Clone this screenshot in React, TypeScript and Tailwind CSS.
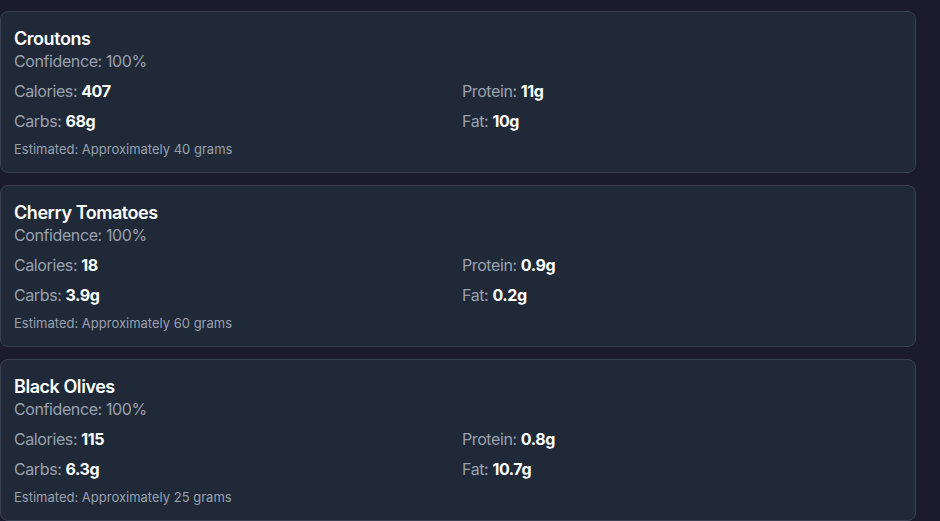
const foods = [
  {
    name: "Croutons",
    confidence: "100%",
    calories: "407",
    protein: "11g",
    carbs: "68g",
    fat: "10g",
    estimate: "Approximately 40 grams",
  },
  {
    name: "Cherry Tomatoes",
    confidence: "100%",
    calories: "18",
    protein: "0.9g",
    carbs: "3.9g",
    fat: "0.2g",
    estimate: "Approximately 60 grams",
  },
  {
    name: "Black Olives",
    confidence: "100%",
    calories: "115",
    protein: "0.8g",
    carbs: "6.3g",
    fat: "10.7g",
    estimate: "Approximately 25 grams",
  },
];

function Stat({ label, value }: { label: string; value: string }) {
  return (
    <p className="text-base leading-6 tracking-tight text-gray-400">
      {label}: <span className="font-bold text-white">{value}</span>
    </p>
  );
}

export default function App() {
  return (
    <div
      className="min-h-[521px] w-full bg-[#1c1b2d] pt-[11px]"
      style={{ fontFamily: "Inter, 'Noto Sans', sans-serif" }}
    >
      <div className="flex w-[916px] flex-col gap-3">
        {foods.map((food) => (
          <div
            key={food.name}
            className="rounded-lg border border-[#374151] bg-[#1f2937] px-[13px] pt-[16px] pb-[13px]"
          >
            <h3 className="text-lg leading-[21px] font-semibold tracking-tight text-white">
              {food.name}
            </h3>
            <p className="text-base leading-6 tracking-tight text-gray-400">
              Confidence: {food.confidence}
            </p>

            <div className="mt-[6px] grid grid-cols-2 gap-x-2 gap-y-[6px]">
              <Stat label="Calories" value={food.calories} />
              <Stat label="Protein" value={food.protein} />
              <Stat label="Carbs" value={food.carbs} />
              <Stat label="Fat" value={food.fat} />
            </div>

            <p className="mt-[6px] text-[13px] leading-5 text-gray-400">
              Estimated: {food.estimate}
            </p>
          </div>
        ))}
      </div>
    </div>
  );
}
